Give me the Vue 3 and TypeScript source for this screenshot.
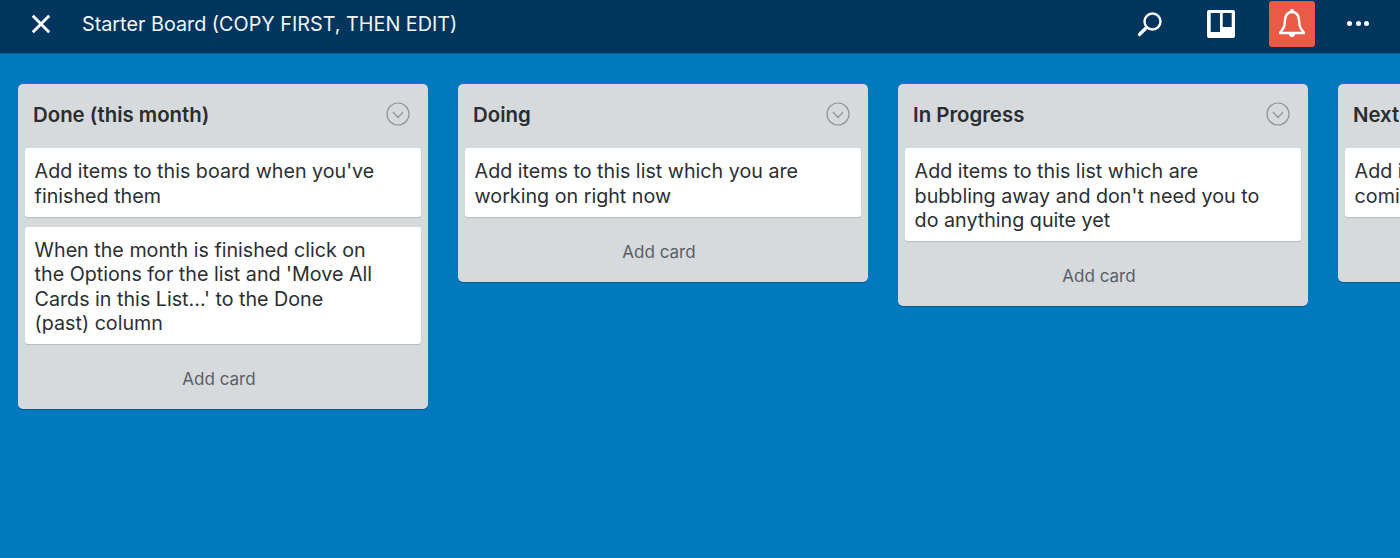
<script setup lang="ts">
interface List { title: string; cards: string[][] }
const lists: List[] = [
  { title: 'Done (this month)', cards: [
    ["Add items to this board when you've", 'finished them'],
    ['When the month is finished click on', "the Options for the list and 'Move All", "Cards in this List...' to the Done", '(past) column'],
  ] },
  { title: 'Doing', cards: [['Add items to this list which you are', 'working on right now']] },
  { title: 'In Progress', cards: [['Add items to this list which are', "bubbling away and don't need you to", 'do anything quite yet']] },
  { title: 'Next Up', cards: [['Add items to this list which are', 'coming up next']] },
]
</script>

<template>
  <div class="page">
    <header class="bar">
      <svg class="close" width="22" height="22" viewBox="0 0 22 22" aria-hidden="true">
        <path d="M2.8 2.8 L19.2 19.2 M19.2 2.8 L2.8 19.2" stroke="#fff" stroke-width="2.9" fill="none" />
      </svg>
      <div class="title">Starter Board (COPY FIRST, THEN EDIT)</div>
      <div class="actions">
        <svg class="search" width="28" height="28" viewBox="0 0 28 28" aria-hidden="true">
          <circle cx="16.5" cy="11.5" r="8" stroke="#fff" stroke-width="2.4" fill="none" />
          <path d="M10.5 17.5 L3.5 24.5" stroke="#fff" stroke-width="3.2" stroke-linecap="round" />
        </svg>
        <svg class="boards" width="28" height="28" viewBox="0 0 28 28" aria-hidden="true">
          <path fill="#fff" fill-rule="evenodd" d="M2 0 H26 a2 2 0 0 1 2 2 V26 a2 2 0 0 1 -2 2 H2 a2 2 0 0 1 -2 -2 V2 a2 2 0 0 1 2 -2 Z M4.2 3 a.5 .5 0 0 0 -.5 .5 V21.5 a.5 .5 0 0 0 .5 .5 H12.5 a.5 .5 0 0 0 .5 -.5 V3.5 a.5 .5 0 0 0 -.5 -.5 Z M16.2 3 a.5 .5 0 0 0 -.5 .5 V16.5 a.5 .5 0 0 0 .5 .5 H24.2 a.5 .5 0 0 0 .5 -.5 V3.5 a.5 .5 0 0 0 -.5 -.5 Z" />
        </svg>
        <div class="bell">
          <svg width="30" height="34" viewBox="0 0 30 34" aria-hidden="true">
            <path d="M3 26 C3.5 24 7 22.5 7.5 18 L8 13 C8.5 8 11 5 15 5 C19 5 21.5 8 22 13 L22.5 18 C23 22.5 26.5 24 27 26 Z" stroke="#fff" stroke-width="2.4" fill="none" stroke-linejoin="round" />
            <path d="M13.2 3.5 a1.8 1.8 0 0 1 3.6 0 V5 h-3.6 Z M12 27 h6 a3 3 0 0 1 -6 0 Z" fill="#fff" />
          </svg>
        </div>
        <div class="more"><i></i><i></i><i></i></div>
      </div>
    </header>
    <main class="board">
      <section v-for="list in lists" :key="list.title" class="list">
        <div class="head">
          <h2>{{ list.title }}</h2>
          <svg width="24" height="24" viewBox="0 0 24 24" aria-hidden="true">
            <circle cx="12" cy="12" r="11" stroke="#8f959b" stroke-width="1.2" fill="none" />
            <path d="M7 10 L12 15.5 L17 10" stroke="#8f959b" stroke-width="1.2" fill="none" />
          </svg>
        </div>
        <div class="cards">
          <article v-for="(card, i) in list.cards" :key="i" class="card">
            <div v-for="line in card" :key="line" class="line">{{ line }}</div>
          </article>
        </div>
        <div class="add">Add card</div>
      </section>
    </main>
  </div>
</template>

<style>
html, body { margin: 0; background: #0079bf; overflow: hidden; }
</style>

<style scoped>
.page {
  width: 1400px;
  height: 558px;
  overflow: hidden;
  background: #0079bf;
  font-family: Inter, "Liberation Sans", sans-serif;
}
.bar {
  box-sizing: border-box;
  height: 54px;
  padding-bottom: 6px;
  background: #00355d;
  border-bottom: 1px solid #0a5c92;
  display: flex;
  align-items: center;
  color: #fff;
}
.close { margin-left: 30px; }
.title {
  margin-left: 30px;
  font-size: 19.8px;
  font-weight: 400;
  color: #f2f6f9;
  white-space: nowrap;
}
.actions {
  margin-left: auto;
  display: flex;
  align-items: center;
  height: 46px;
  padding-right: 31px;
}
.search { margin-right: 43px; }
.boards { margin-right: 34px; }
.bell {
  width: 46px;
  height: 46px;
  background: #eb5a46;
  border-radius: 3px;
  display: flex;
  align-items: center;
  justify-content: center;
}
.more {
  display: flex;
  gap: 3.5px;
  margin-left: 32px;
}
.more i {
  width: 5px;
  height: 5px;
  border-radius: 50%;
  background: #fff;
}
.board {
  display: flex;
  align-items: flex-start;
  gap: 30px;
  padding: 30px 0 0 18px;
}
.list {
  flex: 0 0 410px;
  background: #d6dadc;
  border-radius: 5px;
  box-shadow: 0 1px 1px rgba(0, 30, 60, 0.35);
  padding: 0 7px;
  box-sizing: border-box;
}
.head {
  box-sizing: border-box;
  height: 64px;
  display: flex;
  align-items: center;
  justify-content: space-between;
  padding: 0 11px 4px 8px;
}
.head h2 {
  margin: 0;
  font-size: 20.4px;
  font-weight: 600;
  color: #292d30;
  white-space: nowrap;
}
.cards {
  display: flex;
  flex-direction: column;
  gap: 10px;
}
.card {
  background: #fff;
  border-radius: 3px;
  box-shadow: 0 1px 1px rgba(0, 0, 0, 0.15);
  padding: 11px 9.6px 8.5px;
  font-size: 19.7px;
  line-height: 24.5px;
  color: #2b2f33;
}
.line { white-space: nowrap; }
.add {
  box-sizing: border-box;
  height: 65px;
  display: flex;
  align-items: center;
  justify-content: center;
  padding: 5px 8px 0 0;
  font-size: 17px;
  color: #5a6067;
}
</style>
